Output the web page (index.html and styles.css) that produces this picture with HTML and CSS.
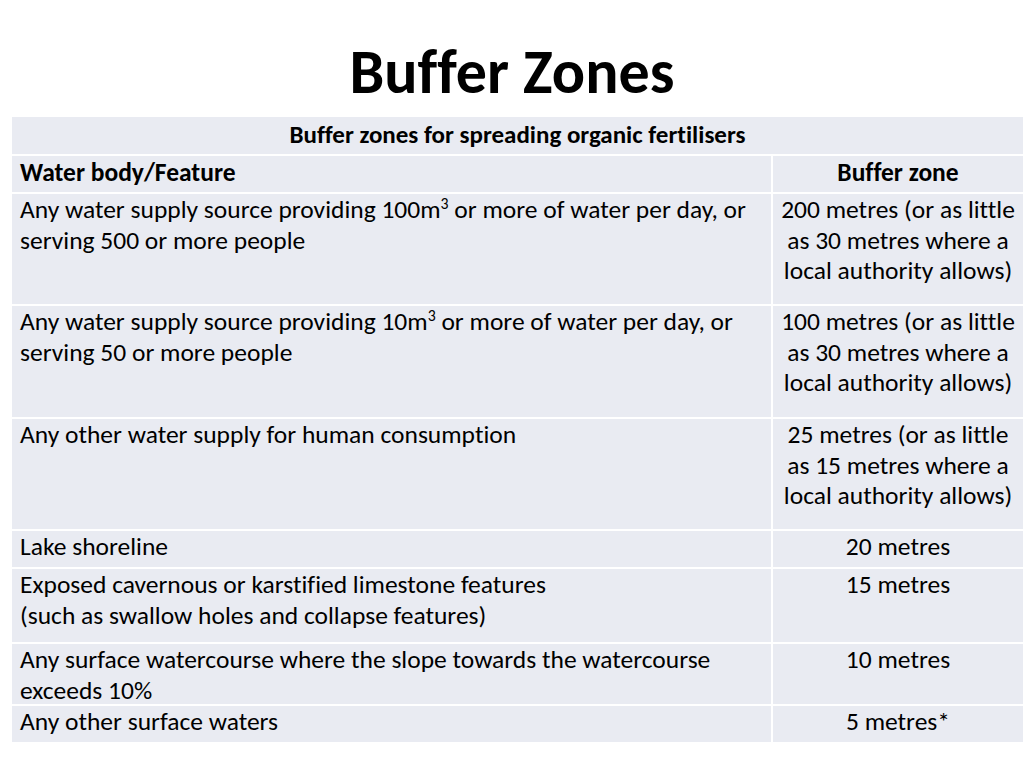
FILE: index.html
```html
<!DOCTYPE html>
<html lang="en">
<head>
<meta charset="utf-8">
<title>Buffer Zones</title>
<link rel="stylesheet" href="styles.css">
</head>
<body>
<h1 class="title">Buffer Zones</h1>
<div class="table">
  <div class="cell caption">Buffer zones for spreading organic fertilisers</div>
  <div class="cell head">Water body/Feature</div>
  <div class="cell head center">Buffer zone</div>
  <div class="cell">Any water supply source providing 100m<sup>3</sup> or more of water per day, or<br>serving 500 or more people</div>
  <div class="cell center">200 metres (or as little<br>as 30 metres where a<br>local authority allows)</div>
  <div class="cell">Any water supply source providing 10m<sup>3</sup> or more of water per day, or<br>serving 50 or more people</div>
  <div class="cell center">100 metres (or as little<br>as 30 metres where a<br>local authority allows)</div>
  <div class="cell">Any other water supply for human consumption</div>
  <div class="cell center">25 metres (or as little<br>as 15 metres where a<br>local authority allows)</div>
  <div class="cell">Lake shoreline</div>
  <div class="cell center">20 metres</div>
  <div class="cell">Exposed cavernous or karstified limestone features<br>(such as swallow holes and collapse features)</div>
  <div class="cell center">15 metres</div>
  <div class="cell">Any surface watercourse where the slope towards the watercourse<br>exceeds 10%</div>
  <div class="cell center">10 metres</div>
  <div class="cell">Any other surface waters</div>
  <div class="cell center">5 metres*</div>
</div>
</body>
</html>
```
FILE: styles.css
```css
html, body {
  margin: 0;
  padding: 0;
  background: #ffffff;
}
body {
  font-family: Calibri, Carlito, Lato, "Liberation Sans", sans-serif;
  font-variant-ligatures: none;
  color: #000000;
  width: 1024px;
  height: 768px;
  overflow: hidden;
}
.title {
  margin: 0;
  height: 117px;
  box-sizing: border-box;
  padding-top: 37px;
  text-align: center;
  font-size: 62px;
  line-height: 70px;
  font-weight: 700;
}
.table {
  margin-left: 12px;
  width: 1011px;
  display: grid;
  grid-template-columns: 759px 250px;
  grid-template-rows: 37px 36px 110px 111px 110px 36px 73px 60px 36px;
  gap: 2px;
  background: #ffffff;
}
.cell {
  background: #e9ebf2;
  font-size: 25.5px;
  line-height: 30.5px;
  padding: 1px 8px 0 8px;
  white-space: nowrap;
  overflow: visible;
}
.caption {
  grid-column: 1 / 3;
  text-align: center;
  font-weight: 700;
  font-size: 25px;
  padding-top: 3px;
}
.head {
  font-weight: 700;
  padding-top: 2px;
}
.center {
  text-align: center;
  padding-left: 0;
  padding-right: 0;
}
sup {
  font-size: 62%;
  line-height: 0;
  vertical-align: 0.55em;
}
```
